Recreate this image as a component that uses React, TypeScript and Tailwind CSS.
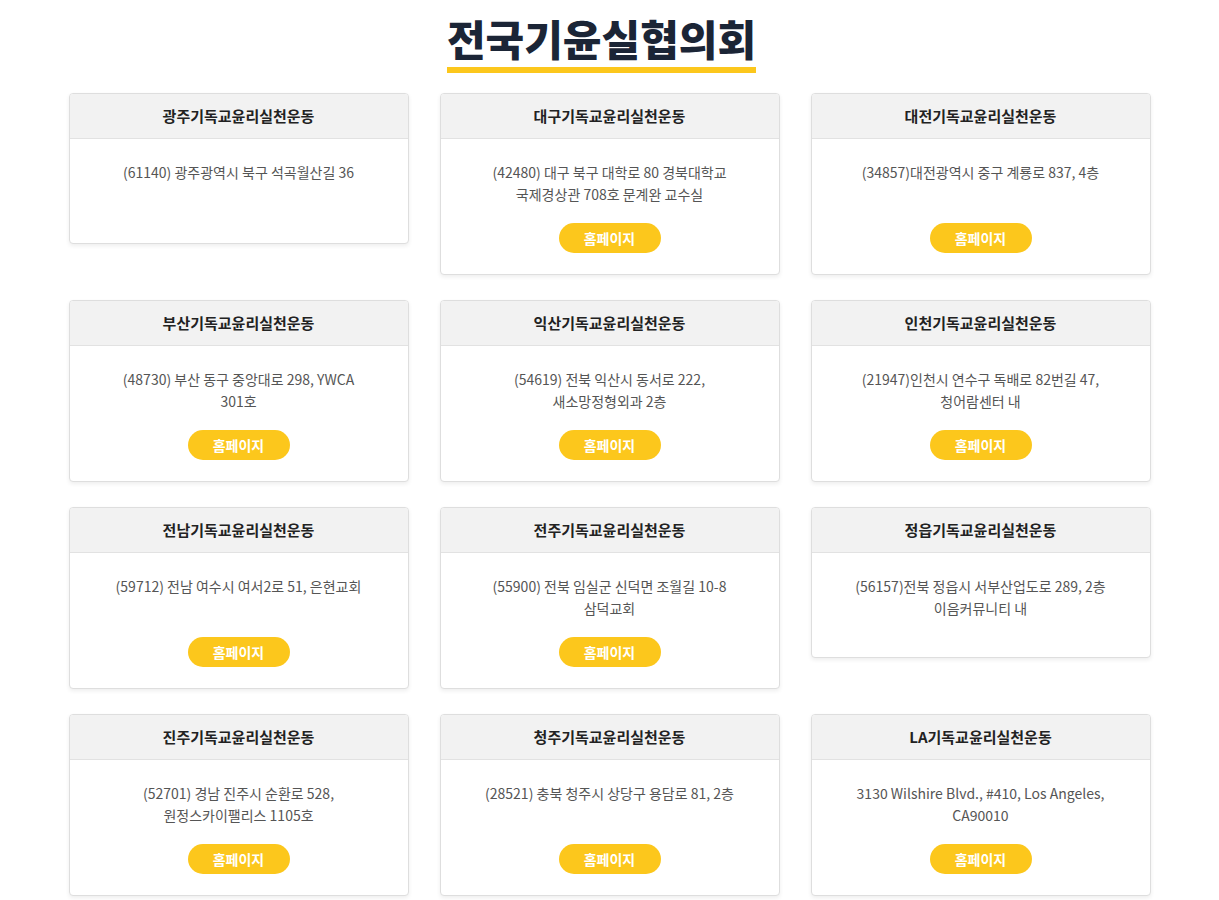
import React from 'react';

type Branch = {
  name: string;
  address: string[];
  link?: boolean;
};

const BRANCHES: Branch[] = [
  { name: '광주기독교윤리실천운동', address: ['(61140) 광주광역시 북구 석곡월산길 36'] },
  { name: '대구기독교윤리실천운동', address: ['(42480) 대구 북구 대학로 80 경북대학교', '국제경상관 708호 문계완 교수실'], link: true },
  { name: '대전기독교윤리실천운동', address: ['(34857)대전광역시 중구 계룡로 837, 4층'], link: true },
  { name: '부산기독교윤리실천운동', address: ['(48730) 부산 동구 중앙대로 298, YWCA', '301호'], link: true },
  { name: '익산기독교윤리실천운동', address: ['(54619) 전북 익산시 동서로 222,', '새소망정형외과 2층'], link: true },
  { name: '인천기독교윤리실천운동', address: ['(21947)인천시 연수구 독배로 82번길 47,', '청어람센터 내'], link: true },
  { name: '전남기독교윤리실천운동', address: ['(59712) 전남 여수시 여서2로 51, 은현교회'], link: true },
  { name: '전주기독교윤리실천운동', address: ['(55900) 전북 임실군 신덕면 조월길 10-8', '삼덕교회'], link: true },
  { name: '정읍기독교윤리실천운동', address: ['(56157)전북 정읍시 서부산업도로 289, 2층', '이음커뮤니티 내'] },
  { name: '진주기독교윤리실천운동', address: ['(52701) 경남 진주시 순환로 528,', '원정스카이팰리스 1105호'], link: true },
  { name: '청주기독교윤리실천운동', address: ['(28521) 충북 청주시 상당구 용담로 81, 2층'], link: true },
  { name: 'LA기독교윤리실천운동', address: ['3130 Wilshire Blvd., #410, Los Angeles,', 'CA90010'], link: true },
];

function BranchCard({ branch }: { branch: Branch }) {
  return (
    <div className="rounded-[4px] border border-[#dedede] bg-white shadow-[0_2px_4px_rgba(0,0,0,0.07)] overflow-hidden">
      <div className="h-[45px] flex items-center justify-center bg-[#f2f2f2] border-b border-[#e2e2e2]">
        <h3 className="text-[15px] font-bold text-[#222]">{branch.name}</h3>
      </div>
      <div className="flex flex-col items-center pt-[22px] pb-[21px]">
        <p className="min-h-[44px] text-[14px] leading-[22px] text-[#555] text-center">
          {branch.address.map((line, i) => (
            <span key={i} className="block">{line}</span>
          ))}
        </p>
        {branch.link ? (
          <a
            href="#"
            className="mt-[18px] w-[102px] h-[30px] rounded-full bg-[#fcc71c] flex items-center justify-center text-[14px] font-bold text-white"
          >
            홈페이지
          </a>
        ) : (
          <div className="h-[17px]" />
        )}
      </div>
    </div>
  );
}

export default function App() {
  return (
    <div
      className="min-h-[900px] bg-white"
      style={{ fontFamily: '"Noto Sans CJK KR", "Noto Sans", sans-serif' }}
    >
      <div className="w-[1082px] mx-auto pt-[13px] pb-4">
        <div className="flex justify-center mb-[20px]">
          <div className="inline-flex flex-col items-center mr-[16px]">
            <h2 className="text-[42px] leading-[50px] font-black text-[#1b2536]">
              전국기윤실협의회
            </h2>
            <span className="mt-[4px] h-[6px] w-full bg-[#fcc71c]"></span>
          </div>
        </div>
        <div className="grid grid-cols-3 gap-x-[31px] gap-y-[25px] items-start">
          {BRANCHES.map((b) => (
            <BranchCard key={b.name} branch={b} />
          ))}
        </div>
      </div>
    </div>
  );
}
